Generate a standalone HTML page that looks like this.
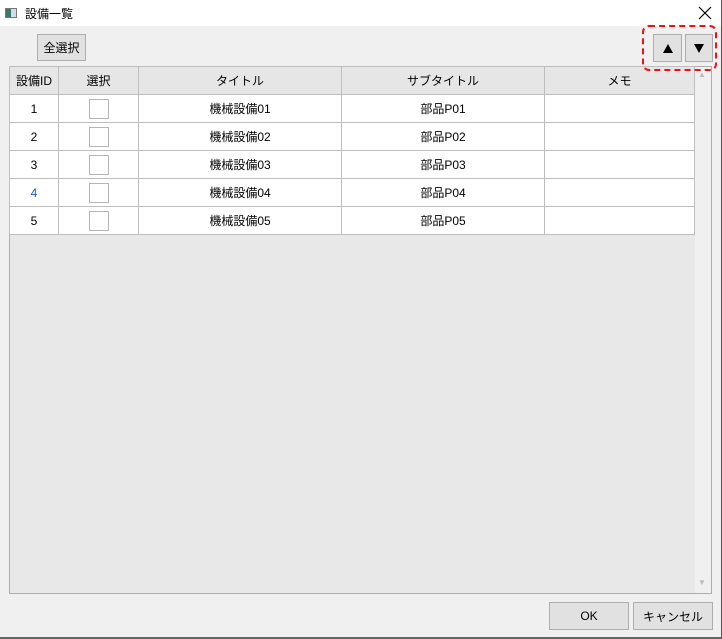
<!DOCTYPE html><html><head><meta charset="utf-8"><style>
*{box-sizing:border-box;margin:0;padding:0}
body{width:722px;height:639px;background:#f0f0f0;font-family:"Liberation Sans","Noto Sans CJK JP",sans-serif;font-size:12px;color:#000;position:relative;overflow:hidden}
.a{position:absolute}
.btn{position:absolute;background:#e1e1e1;border:1px solid #adadad;display:flex;align-items:center;justify-content:center;font-size:12px}
table{border-collapse:collapse;position:absolute;left:9px;top:66px;table-layout:fixed}
td,th{border:1px solid #bdbdbd;text-align:center;font-weight:normal;height:28px;background:#fff}
th{background:#e6e6e6;height:28px}
.cb{display:inline-block;width:20px;height:20px;border:1px solid #b5b5b5;vertical-align:middle;background:#fff}
</style></head><body>
<div class="a" style="left:0;top:0;width:722px;height:26px;background:#fff"></div>
<div class="a" style="left:5px;top:8px;width:12px;height:10px;border:1px solid #777;background:linear-gradient(90deg,#3a7a6a 50%,#cde 50%)"></div>
<div class="a" style="left:25px;top:5px;font-size:12px">設備一覧</div>
<svg class="a" style="left:698px;top:6px" width="14" height="14"><path d="M1 1L13 13M13 1L1 13" stroke="#000" stroke-width="1.2"/></svg>
<div class="a" style="left:721px;top:0;width:1px;height:639px;background:#555"></div>
<div class="a" style="left:0;top:637px;width:722px;height:2px;background:#666"></div>
<div class="btn" style="left:37px;top:34px;width:49px;height:27px">全選択</div>
<div class="btn" style="left:653px;top:34px;width:29px;height:28px"><svg width="10" height="9"><path d="M5 0L10 9H0Z"/></svg></div>
<div class="btn" style="left:685px;top:34px;width:28px;height:28px"><svg width="10" height="9"><path d="M0 0H10L5 9Z"/></svg></div>
<div class="a" style="left:9px;top:66px;width:703px;height:528px;background:#e8e8e8;border:1px solid #adadad"></div>
<div class="a" style="left:695px;top:67px;width:16px;height:526px;background:#f0f0f0"></div>
<div class="a" style="left:698px;top:70px;font-size:8px;color:#bbb">▲</div>
<div class="a" style="left:698px;top:578px;font-size:8px;color:#bbb">▼</div>
<table>
<colgroup><col style="width:49px"><col style="width:80px"><col style="width:203px"><col style="width:203px"><col style="width:150px"></colgroup>
<tr><th>設備ID</th><th>選択</th><th>タイトル</th><th>サブタイトル</th><th>メモ</th></tr>
<tr><td>1</td><td><span class="cb"></span></td><td>機械設備01</td><td>部品P01</td><td></td></tr>
<tr><td>2</td><td><span class="cb"></span></td><td>機械設備02</td><td>部品P02</td><td></td></tr>
<tr><td>3</td><td><span class="cb"></span></td><td>機械設備03</td><td>部品P03</td><td></td></tr>
<tr><td style="color:#1e5aa8">4</td><td><span class="cb"></span></td><td>機械設備04</td><td>部品P04</td><td></td></tr>
<tr><td>5</td><td><span class="cb"></span></td><td>機械設備05</td><td>部品P05</td><td></td></tr>
</table>
<div class="a" style="left:642px;top:25px;width:75px;height:46px;border:2px dashed #e8141c;border-radius:7px;z-index:5"></div>
<div class="btn" style="left:549px;top:602px;width:80px;height:28px">OK</div>
<div class="btn" style="left:633px;top:602px;width:80px;height:28px">キャンセル</div>
</body></html>
